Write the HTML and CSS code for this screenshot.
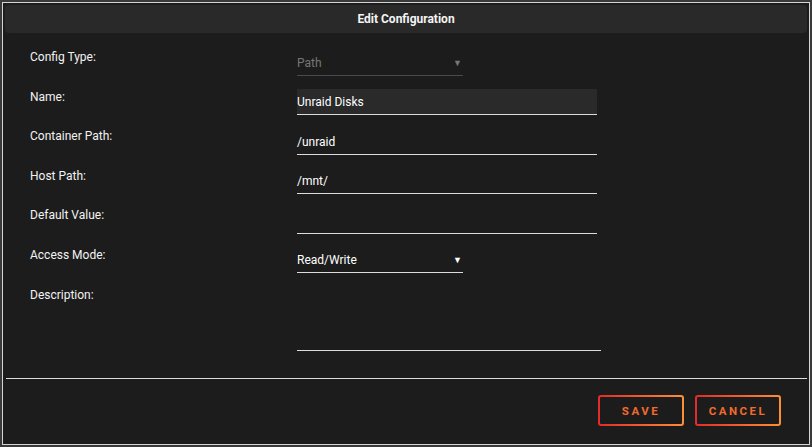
FILE: index.html
```html
<!DOCTYPE html>
<html lang="en">
<head>
    <title>Edit Configuration</title>
    <link rel="stylesheet" href="styles.css">
</head>
<body>
    <div class="dialog">
        <div class="dialog-title">Edit Configuration</div>
        <form class="config-form">
            <div class="row">
                <label class="row-label">Config Type:</label>
                <div class="select disabled">
                    <span class="select-value">Path</span>
                    <span class="select-arrow">&#9660;</span>
                </div>
            </div>
            <div class="row">
                <label class="row-label">Name:</label>
                <div class="field focused">Unraid Disks</div>
            </div>
            <div class="row">
                <label class="row-label">Container Path:</label>
                <div class="field">/unraid</div>
            </div>
            <div class="row">
                <label class="row-label">Host Path:</label>
                <div class="field">/mnt/</div>
            </div>
            <div class="row">
                <label class="row-label">Default Value:</label>
                <div class="field"></div>
            </div>
            <div class="row">
                <label class="row-label">Access Mode:</label>
                <div class="select">
                    <span class="select-value">Read/Write</span>
                    <span class="select-arrow">&#9660;</span>
                </div>
            </div>
            <div class="row row-tall">
                <label class="row-label">Description:</label>
                <div class="textarea"></div>
            </div>
        </form>
        <hr class="divider">
        <div class="actions">
            <button class="btn">Save</button>
            <button class="btn">Cancel</button>
        </div>
    </div>
</body>
</html>
```

FILE: styles.css
```css
body {
    margin: 0;
    padding: 2px;
    background-color: #3a3a3a;
    font-family: Roboto, "Liberation Sans", sans-serif;
    font-size: 12px;
    color: #f2f2f2;
}

.dialog {
    box-sizing: border-box;
    height: 443px;
    padding: 2px;
    border: 1px solid #d4d4d4;
    background-color: #1c1c1c;
}

.dialog-title {
    height: 28px;
    line-height: 28px;
    border-radius: 4px;
    background-color: #292929;
    text-align: center;
    font-weight: bold;
    color: #f4f4f4;
}

.config-form {
    padding: 16.5px 0 0 25px;
}

.row {
    display: flex;
    height: 39.6px;
}

.row-tall {
    height: 66px;
}

.row-label {
    width: 267px;
    line-height: 16px;
    margin-top: -0.5px;
}

.field,
.select,
.textarea {
    box-sizing: border-box;
    height: 26px;
    line-height: 26px;
    border-bottom: 1px solid #dcdcdc;
    color: #ffffff;
}

.field {
    width: 300px;
}

.field.focused {
    background-color: #2a2a2a;
}

.select {
    display: flex;
    justify-content: space-between;
    width: 166px;
}

.select.disabled {
    color: #777777;
    border-bottom-color: #4a4a4a;
}

.select-arrow {
    font-size: 9px;
    padding-right: 1px;
}

.textarea {
    width: 304px;
    height: 64px;
}

.divider {
    margin: 25px 0 0 1px;
    border: none;
    border-top: 1px solid #dcdcdc;
}

.actions {
    display: flex;
    justify-content: flex-end;
    gap: 11px;
    padding: 16px 26px 0 0;
}

.btn {
    width: 86px;
    height: 31px;
    border: 2px solid transparent;
    border-radius: 3px;
    background: linear-gradient(#1c1c1c, #1c1c1c) padding-box,
                linear-gradient(90deg, #e22b2b, #ff8f33) border-box;
    color: #f26b2c;
    font-family: Roboto, "Liberation Sans", sans-serif;
    font-size: 11.5px;
    font-weight: bold;
    letter-spacing: 2.5px;
    text-transform: uppercase;
    cursor: pointer;
}
```
